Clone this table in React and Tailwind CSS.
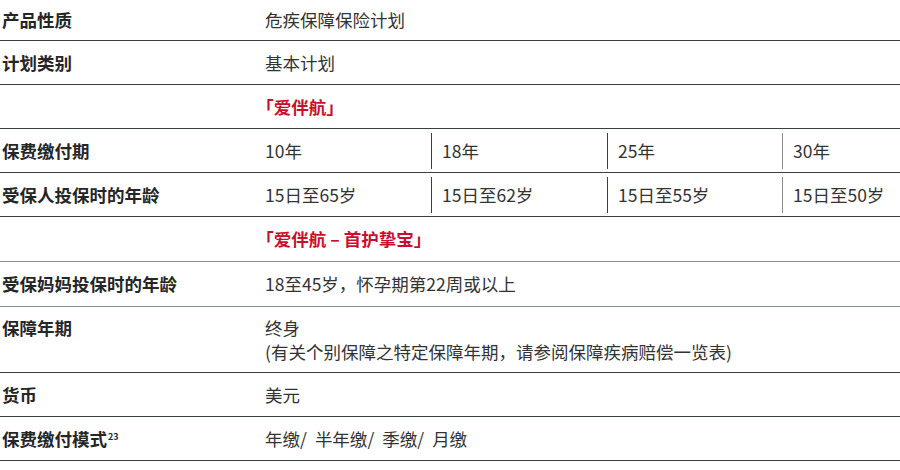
const font = "font-['Noto_Sans_CJK_SC','Noto_Sans',sans-serif]";

function Label({ children }) {
  return (
    <div className="w-[255px] shrink-0 pl-[2px] font-bold text-[#262626]">{children}</div>
  );
}

function Row({ label, children, h = "h-[44px]", line = "border-[#3a3f44]", top = false }) {
  return (
    <div className={`flex ${top ? "items-start pt-[9px]" : "items-center"} ${h} border-b ${line}`}>
      <Label>{label}</Label>
      <div className="flex-1 pl-[10px]">{children}</div>
    </div>
  );
}

function SplitRow({ label, values }) {
  return (
    <div className="flex items-center h-[44px] border-b border-[#3a3f44]">
      <Label>{label}</Label>
      <div className="flex-1 grid grid-cols-[176px_176px_175px_1fr] items-center">
        {values.map((v, i) => (
          <div
            key={v}
            className={`h-[36px] flex items-center pl-[10px] ${i > 0 ? "border-l border-[#3a3f44]" : ""} ${i === 3 ? "border-[#8a8d90]" : ""}`}
          >
            {v}
          </div>
        ))}
      </div>
    </div>
  );
}

function Red({ children }) {
  return <span className="font-bold text-[#c8102e]">{children}</span>;
}

function Bracket({ children }) {
  return <span className="[font-feature-settings:'halt']">{children}</span>;
}

// payment modes, separated by a slash and a wide gap
const modes = ["年缴", "半年缴", "季缴", "月缴"];

export default function App() {
  return (
    <div className={`${font} w-[900px] h-[470px] bg-white text-[17.5px] leading-[24px] text-[#333333] overflow-hidden`}>
      <Row label="产品性质" h="h-[41px]">危疾保障保险计划</Row>
      <Row label="计划类别" h="h-[44px]">基本计划</Row>
      <Row label="" h="h-[44px]">
        <Red>
          <Bracket>「</Bracket>爱伴航<Bracket>」</Bracket>
        </Red>
      </Row>
      <SplitRow label="保费缴付期" values={["10年", "18年", "25年", "30年"]} />
      <SplitRow
        label="受保人投保时的年龄"
        values={["15日至65岁", "15日至62岁", "15日至55岁", "15日至50岁"]}
      />
      <Row label="" h="h-[45px]" line="border-[#8a8d90]">
        <Red>
          <Bracket>「</Bracket>爱伴航 – 首护挚宝<Bracket>」</Bracket>
        </Red>
      </Row>
      <Row label="受保妈妈投保时的年龄" h="h-[45px]" line="border-[#8a8d90]">
        18至45岁，怀孕期第22周或以上
      </Row>
      <Row label="保障年期" h="h-[66px]" top>
        <div>终身</div>
        <div>(有关个别保障之特定保障年期，请参阅保障疾病赔偿一览表)</div>
      </Row>
      <Row label="货币" h="h-[44px]">美元</Row>
      <Row
        label={
          <span>
            保费缴付模式
            <span className="relative top-[-6px] ml-[1px] text-[9px] leading-none">23</span>
          </span>
        }
        h="h-[44px]"
      >
        {modes.map((m, i) => (
          <span key={m}>
            {m}
            {i < modes.length - 1 && <span className="mr-[8px]">/</span>}
          </span>
        ))}
      </Row>
    </div>
  );
}
